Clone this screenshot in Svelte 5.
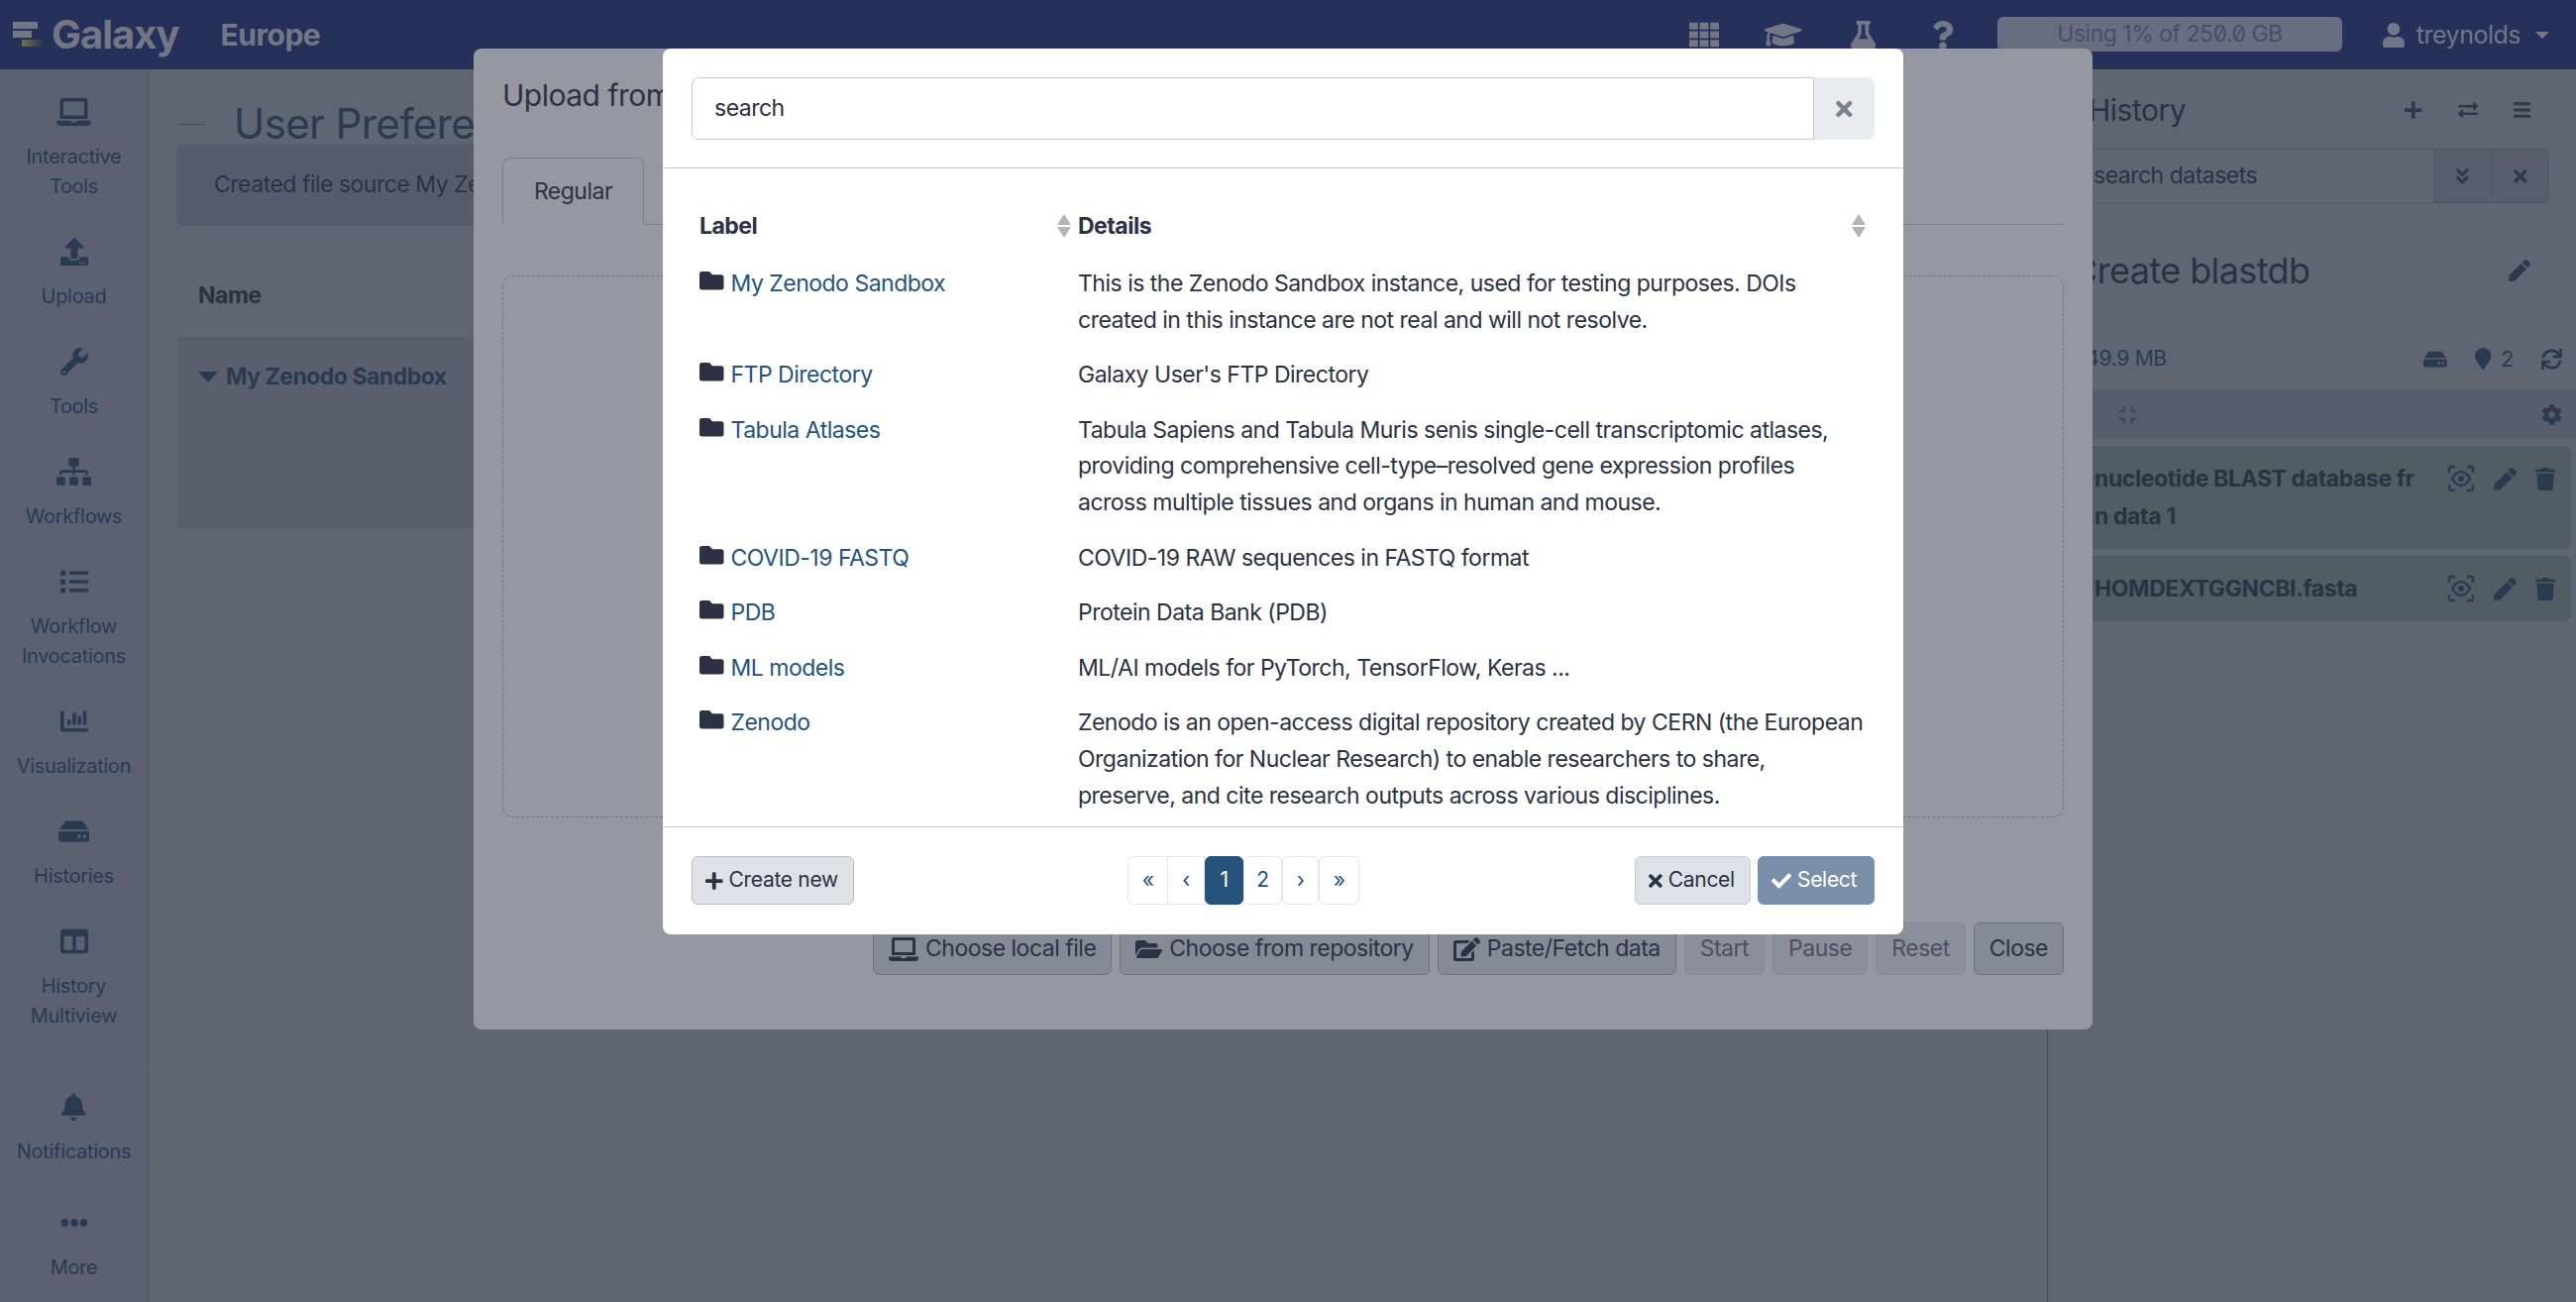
<script>
  const icons = {
    laptop: [640, "M624 416H381.54c-.74 19.81-14.71 32-32.74 32H288c-18.69 0-33.02-17.47-32.77-32H16c-8.8 0-16 7.2-16 16v16c0 35.2 28.8 64 64 64h512c35.2 0 64-28.8 64-64v-16c0-8.8-7.2-16-16-16zM576 48c0-26.4-21.6-48-48-48H112C85.6 0 64 21.6 64 48v336h512V48zm-64 272H128V64h384v256z"],
    upload: [512, "M296 384h-80c-13.3 0-24-10.7-24-24V192h-87.7c-17.8 0-26.7-21.5-14.1-34.1L242.3 5.7c7.5-7.5 19.8-7.5 27.3 0l152.2 152.2c12.6 12.6 3.7 34.1-14.1 34.1H320v168c0 13.3-10.7 24-24 24zm216-8v112c0 13.3-10.7 24-24 24H24c-13.3 0-24-10.7-24-24V376c0-13.3 10.7-24 24-24h136v8c0 30.9 25.1 56 56 56h80c30.9 0 56-25.1 56-56v-8h136c13.3 0 24 10.7 24 24zm-124 88c0-11-9-20-20-20s-20 9-20 20 9 20 20 20 20-9 20-20zm64 0c0-11-9-20-20-20s-20 9-20 20 9 20 20 20 20-9 20-20z"],
    wrench: [512, "M507.73 109.1c-2.24-9.03-13.54-12.09-20.12-5.51l-74.36 74.36-67.88-11.31-11.31-67.88 74.36-74.36c6.62-6.62 3.43-17.9-5.66-20.16-47.38-11.74-99.55.91-136.58 37.93-39.64 39.64-50.55 97.1-34.05 147.2L18.74 402.76c-24.99 24.99-24.99 65.51 0 90.5 24.99 24.99 65.51 24.99 90.5 0l213.21-213.21c50.12 16.71 107.47 5.68 147.37-34.22 37.07-37.07 49.7-89.32 37.91-136.73zM64 472c-13.25 0-24-10.75-24-24 0-13.26 10.75-24 24-24s24 10.74 24 24c0 13.25-10.75 24-24 24z"],
    sitemap: [640, "M128 352H32c-17.67 0-32 14.33-32 32v96c0 17.67 14.33 32 32 32h96c17.67 0 32-14.33 32-32v-96c0-17.67-14.33-32-32-32zm-24-80h192v48h48v-48h192v48h48v-57.59c0-21.17-17.23-38.41-38.41-38.41H344v-64h40c17.67 0 32-14.33 32-32V32c0-17.67-14.33-32-32-32H256c-17.67 0-32 14.33-32 32v96c0 17.67 14.33 32 32 32h40v64H94.41C73.23 224 56 241.23 56 262.41V320h48v-48zm264 80h-96c-17.67 0-32 14.33-32 32v96c0 17.67 14.33 32 32 32h96c17.67 0 32-14.33 32-32v-96c0-17.67-14.33-32-32-32zm240 0h-96c-17.67 0-32 14.33-32 32v96c0 17.67 14.33 32 32 32h96c17.67 0 32-14.33 32-32v-96c0-17.67-14.33-32-32-32z"],
    list: [512, "M80 368H16a16 16 0 0 0-16 16v64a16 16 0 0 0 16 16h64a16 16 0 0 0 16-16v-64a16 16 0 0 0-16-16zm0-320H16A16 16 0 0 0 0 64v64a16 16 0 0 0 16 16h64a16 16 0 0 0 16-16V64a16 16 0 0 0-16-16zm0 160H16a16 16 0 0 0-16 16v64a16 16 0 0 0 16 16h64a16 16 0 0 0 16-16v-64a16 16 0 0 0-16-16zm416 176H176a16 16 0 0 0-16 16v32a16 16 0 0 0 16 16h320a16 16 0 0 0 16-16v-32a16 16 0 0 0-16-16zm0-320H176a16 16 0 0 0-16 16v32a16 16 0 0 0 16 16h320a16 16 0 0 0 16-16V80a16 16 0 0 0-16-16zm0 160H176a16 16 0 0 0-16 16v32a16 16 0 0 0 16 16h320a16 16 0 0 0 16-16v-32a16 16 0 0 0-16-16z"],
    chart: [512, "M332.8 320h38.4c6.4 0 12.8-6.4 12.8-12.8V172.8c0-6.4-6.4-12.8-12.8-12.8h-38.4c-6.4 0-12.8 6.4-12.8 12.8v134.4c0 6.4 6.4 12.8 12.8 12.8zm96 0h38.4c6.4 0 12.8-6.4 12.8-12.8V76.8c0-6.4-6.4-12.8-12.8-12.8h-38.4c-6.4 0-12.8 6.4-12.8 12.8v230.4c0 6.4 6.4 12.8 12.8 12.8zm-288 0h38.4c6.4 0 12.8-6.4 12.8-12.8v-70.4c0-6.4-6.4-12.8-12.8-12.8h-38.4c-6.4 0-12.8 6.4-12.8 12.8v70.4c0 6.4 6.4 12.8 12.8 12.8zm96 0h38.4c6.4 0 12.8-6.4 12.8-12.8V108.8c0-6.4-6.4-12.8-12.8-12.8h-38.4c-6.4 0-12.8 6.4-12.8 12.8v198.4c0 6.4 6.4 12.8 12.8 12.8zM496 384H64V80c0-8.84-7.16-16-16-16H16C7.16 64 0 71.16 0 80v336c0 17.67 14.33 32 32 32h464c8.84 0 16-7.16 16-16v-32c0-8.84-7.16-16-16-16z"],
    hdd: [576, "M576 304v96c0 26.51-21.49 48-48 48H48c-26.51 0-48-21.49-48-48v-96c0-26.51 21.49-48 48-48h480c26.51 0 48 21.49 48 48zm-48-80a79.557 79.557 0 0 1 30.777 6.165L462.25 85.374A48.003 48.003 0 0 0 422.311 64H153.689a48 48 0 0 0-39.938 21.374L17.223 230.165A79.557 79.557 0 0 1 48 224h480zm-48 96c-17.673 0-32 14.327-32 32s14.327 32 32 32 32-14.327 32-32-14.327-32-32-32zm-96 0c-17.673 0-32 14.327-32 32s14.327 32 32 32 32-14.327 32-32-14.327-32-32-32z"],
    columns: [512, "M464 32H48C21.49 32 0 53.49 0 80v352c0 26.51 21.49 48 48 48h416c26.51 0 48-21.49 48-48V80c0-26.51-21.49-48-48-48zM224 416H64V160h160v256zm224 0H288V160h160v256z"],
    bell: [448, "M224 512c35.32 0 63.97-28.65 63.97-64H160.03c0 35.35 28.65 64 63.97 64zm215.39-149.71c-19.32-20.76-55.47-51.99-55.47-154.29 0-77.7-54.48-139.9-127.94-155.16V32c0-17.67-14.32-32-31.98-32s-31.98 14.33-31.98 32v20.84C118.56 68.1 64.08 130.3 64.08 208c0 102.3-36.15 133.53-55.47 154.29-6 6.45-8.66 14.16-8.61 21.71.11 16.4 12.98 32 32.1 32h383.8c19.12 0 32-15.6 32.1-32 .05-7.55-2.61-15.27-8.61-21.71z"],
    dots: [512, "M328 256c0 39.8-32.2 72-72 72s-72-32.2-72-72 32.2-72 72-72 72 32.2 72 72zm104-72c-39.8 0-72 32.2-72 72s32.2 72 72 72 72-32.2 72-72-32.2-72-72-72zm-352 0c-39.8 0-72 32.2-72 72s32.2 72 72 72 72-32.2 72-72-32.2-72-72-72z"],
    th: [512, "M0 48h150v118H0zM181 48h150v118H181zM362 48h150v118H362zM0 197h150v118H0zM181 197h150v118H181zM362 197h150v118H362zM0 346h150v118H0zM181 346h150v118H181zM362 346h150v118H362z"],
    cap: [640, "M622.34 153.2L343.4 67.5c-15.2-4.67-31.6-4.67-46.79 0L17.66 153.2c-23.54 7.23-23.54 38.36 0 45.59l48.63 14.94c-10.67 13.19-17.23 29.28-17.88 46.9C38.78 266.15 32 276.11 32 288c0 10.78 5.68 19.85 13.86 25.65L20.33 428.53C18.11 438.52 25.71 448 35.94 448h56.11c10.24 0 17.84-9.48 15.62-19.47L82.14 313.65C90.32 307.85 96 298.78 96 288c0-11.57-6.47-21.25-15.66-26.87.76-15.02 8.44-28.3 20.69-36.72L296.6 284.5c9.06 2.78 26.44 6.25 46.79 0l278.95-85.7c23.55-7.24 23.55-38.36 0-45.6zM352.79 315.09c-28.53 8.76-52.84 3.92-65.59 0l-145.02-44.55L128 384c0 35.35 85.96 64 192 64s192-28.65 192-64l-14.18-113.47-145.03 44.56z"],
    flask: [448, "M437.2 403.5L320 215V64h8c13.3 0 24-10.7 24-24V24c0-13.3-10.7-24-24-24H120c-13.3 0-24 10.7-24 24v16c0 13.3 10.7 24 24 24h8v151L10.8 403.5C-18.5 450.6 15.3 512 70.9 512h306.2c55.7 0 89.4-61.5 60.1-108.5zM137.9 320l48.2-77.6c3.7-5.2 5.8-11.6 5.8-18.4V64h64v160c0 6.9 2.2 13.2 5.8 18.4l48.2 77.6h-172z"],
    question: [384, "M202.021 0C122.202 0 70.503 32.703 29.914 91.026c-7.363 10.58-5.093 25.086 5.178 32.874l43.138 32.709c10.373 7.865 25.132 6.026 33.253-4.148 25.049-31.381 43.63-49.449 82.757-49.449 30.764 0 68.816 19.799 68.816 49.631 0 22.552-18.617 34.134-48.993 51.164-35.423 19.86-82.299 44.576-82.299 106.405V320c0 13.255 10.745 24 24 24h72.471c13.255 0 24-10.745 24-24v-5.773c0-42.86 125.268-44.645 125.268-160.627C377.504 66.256 286.902 0 202.021 0zM192 373.459c-38.196 0-69.271 31.075-69.271 69.271 0 38.195 31.075 69.27 69.271 69.27s69.271-31.075 69.271-69.271-31.075-69.27-69.271-69.27z"],
    user: [448, "M224 256c70.7 0 128-57.3 128-128S294.7 0 224 0 96 57.3 96 128s57.3 128 128 128zm89.6 32h-16.7c-22.2 10.2-46.9 16-72.9 16s-50.6-5.8-72.9-16h-16.7C60.2 288 0 348.2 0 422.4V464c0 26.5 21.5 48 48 48h352c26.5 0 48-21.5 48-48v-41.6c0-74.2-60.2-134.4-134.4-134.4z"],
    times: [352, "M242.72 256l100.07-100.07c12.28-12.28 12.28-32.19 0-44.48l-22.24-22.24c-12.28-12.28-32.19-12.28-44.48 0L176 189.28 75.93 89.21c-12.28-12.28-32.19-12.28-44.48 0L9.21 111.45c-12.28 12.28-12.28 32.19 0 44.48L109.28 256 9.21 356.07c-12.28 12.28-12.28 32.19 0 44.48l22.24 22.24c12.28 12.28 32.2 12.28 44.48 0L176 322.72l100.07 100.07c12.28 12.28 32.2 12.28 44.48 0l22.24-22.24c12.28-12.28 12.28-32.19 0-44.48L242.72 256z"],
    folder: [512, "M464 128H272l-64-64H48C21.49 64 0 85.49 0 112v288c0 26.51 21.49 48 48 48h416c26.51 0 48-21.49 48-48V176c0-26.51-21.49-48-48-48z"],
    folderOpen: [576, "M572.694 292.093L500.27 416.248A63.997 63.997 0 0 1 444.989 448H45.025c-18.523 0-30.064-20.093-20.731-36.093l72.424-124.155A64 64 0 0 1 152 256h399.964c18.523 0 30.064 20.093 20.73 36.093zM152 224h328v-48c0-26.51-21.49-48-48-48H272l-64-64H48C21.49 64 0 85.49 0 112v278.046l69.077-118.418C86.214 242.25 117.989 224 152 224z"],
    edit: [576, "M402.6 83.2l90.2 90.2c3.8 3.8 3.8 10 0 13.8L274.4 405.6l-92.8 10.3c-12.4 1.4-22.9-9.1-21.5-21.5l10.3-92.8L388.8 83.2c3.8-3.8 10-3.8 13.8 0zm162-22.9l-48.8-48.8c-15.2-15.2-39.9-15.2-55.2 0l-35.4 35.4c-3.8 3.8-3.8 10 0 13.8l90.2 90.2c3.8 3.8 10 3.8 13.8 0l35.4-35.4c15.2-15.3 15.2-40 0-55.2zM384 346.2V448H64V128h229.8c3.2 0 6.2-1.3 8.5-3.5l40-40c7.6-7.6 2.2-20.5-8.5-20.5H48C21.5 64 0 85.5 0 112v352c0 26.5 21.5 48 48 48h352c26.5 0 48-21.5 48-48V306.2c0-10.7-12.9-16-20.5-8.5l-40 40c-2.2 2.3-3.5 5.3-3.5 8.5z"],
    plus: [448, "M416 208H272V64c0-17.67-14.33-32-32-32h-32c-17.67 0-32 14.33-32 32v144H32c-17.67 0-32 14.33-32 32v32c0 17.67 14.33 32 32 32h144v144c0 17.67 14.33 32 32 32h32c17.67 0 32-14.33 32-32V304h144c17.67 0 32-14.33 32-32v-32c0-17.67-14.33-32-32-32z"],
    check: [512, "M173.898 439.404l-166.4-166.4c-9.997-9.997-9.997-26.206 0-36.204l36.203-36.204c9.997-9.998 26.207-9.998 36.204 0L192 312.69 432.095 72.596c9.997-9.997 26.207-9.997 36.204 0l36.203 36.204c9.997 9.997 9.997 26.206 0 36.204l-294.4 294.401c-9.998 9.997-26.207 9.997-36.204-.001z"],
    exchange: [512, "M0 168v-16c0-13.255 10.745-24 24-24h360V80c0-21.367 25.899-32.042 40.971-16.971l80 80c9.372 9.373 9.372 24.569 0 33.941l-80 80C409.956 271.982 384 261.456 384 240v-48H24c-13.255 0-24-10.745-24-24zm488 152H128v-48c0-21.314-25.862-32.08-40.971-16.971l-80 80c-9.372 9.373-9.372 24.569 0 33.941l80 80C102.057 463.997 128 453.437 128 432v-48h360c13.255 0 24-10.745 24-24v-16c0-13.255-10.745-24-24-24z"],
    bars: [448, "M16 132h416c8.837 0 16-7.163 16-16V76c0-8.837-7.163-16-16-16H16C7.163 60 0 67.163 0 76v40c0 8.837 7.163 16 16 16zm0 160h416c8.837 0 16-7.163 16-16v-40c0-8.837-7.163-16-16-16H16c-8.837 0-16 7.163-16 16v40c0 8.837 7.163 16 16 16zm0 160h416c8.837 0 16-7.163 16-16v-40c0-8.837-7.163-16-16-16H16c-8.837 0-16 7.163-16 16v40c0 8.837 7.163 16 16 16z"],
    chevrons: [320, "M143 256.3L7 120.3c-9.4-9.4-9.4-24.6 0-33.9l22.6-22.6c9.4-9.4 24.6-9.4 33.9 0l96.4 96.4 96.4-96.4c9.4-9.4 24.6-9.4 33.9 0L313 86.3c9.4 9.4 9.4 24.6 0 33.9l-136 136c-9.4 9.5-24.6 9.5-34 .1zm34 192l136-136c9.4-9.4 9.4-24.6 0-33.9l-22.6-22.6c-9.4-9.4-24.6-9.4-33.9 0L160 352.1l-96.4-96.4c-9.4-9.4-24.6-9.4-33.9 0L7 278.3c-9.4 9.4-9.4 24.6 0 33.9l136 136c9.4 9.5 24.6 9.5 34 .1z"],
    pen: [512, "M290.74 93.24l128.02 128.02-277.99 277.99-114.14 12.6C11.35 513.54-1.56 500.62.14 485.34l12.7-114.22 277.9-277.88zm207.2-19.06l-60.11-60.11c-18.75-18.75-49.16-18.75-67.91 0l-56.55 56.55 128.02 128.02 56.55-56.55c18.75-18.76 18.75-49.16 0-67.91z"],
    marker: [384, "M172.268 501.67C26.97 291.031 0 269.413 0 192 0 85.961 85.961 0 192 0s192 85.961 192 192c0 77.413-26.97 99.031-172.268 309.67-9.535 13.774-29.93 13.773-39.464 0z"],
    sync: [512, "M440.65 12.57l4 82.77A247.16 247.16 0 0 0 255.83 8C134.73 8 33.91 94.92 12.29 209.82A12 12 0 0 0 24.09 224h49.05a12 12 0 0 0 11.67-9.26 175.91 175.91 0 0 1 317-56.94l-101.46-4.86a12 12 0 0 0-12.57 12v47.41a12 12 0 0 0 12 12H500a12 12 0 0 0 12-12V12a12 12 0 0 0-12-12h-47.37a12 12 0 0 0-11.98 12.57zM255.83 432a175.61 175.61 0 0 1-146-77.8l101.8 4.87a12 12 0 0 0 12.57-12v-47.4a12 12 0 0 0-12-12H12a12 12 0 0 0-12 12V500a12 12 0 0 0 12 12h47.35a12 12 0 0 0 12-12.6l-4.15-82.57A247.17 247.17 0 0 0 255.83 504c121.11 0 221.93-86.92 243.55-201.82a12 12 0 0 0-11.8-14.18h-49.05a12 12 0 0 0-11.67 9.26A175.86 175.86 0 0 1 255.83 432z"],
    cog: [512, "M487.4 315.7l-42.6-24.6c4.3-23.2 4.3-47 0-70.2l42.6-24.6c4.9-2.8 7.1-8.6 5.5-14-11.1-35.6-30-67.8-54.7-94.6-3.8-4.1-10-5.1-14.8-2.3L380.8 110c-17.9-15.4-38.5-27.3-60.8-35.1V25.8c0-5.6-3.9-10.5-9.4-11.7-36.7-8.2-74.3-7.8-109.2 0-5.5 1.2-9.4 6.1-9.4 11.7V75c-22.2 7.9-42.8 19.8-60.8 35.1L88.7 85.5c-4.9-2.8-11-1.9-14.8 2.3-24.7 26.7-43.6 58.9-54.7 94.6-1.7 5.4.6 11.2 5.5 14L67.3 221c-4.3 23.2-4.3 47 0 70.2l-42.6 24.6c-4.9 2.8-7.1 8.6-5.5 14 11.1 35.6 30 67.8 54.7 94.6 3.8 4.1 10 5.1 14.8 2.3l42.6-24.6c17.9 15.4 38.5 27.3 60.8 35.1v49.2c0 5.6 3.9 10.5 9.4 11.7 36.7 8.2 74.3 7.8 109.2 0 5.5-1.2 9.4-6.1 9.4-11.7v-49.2c22.2-7.9 42.8-19.8 60.8-35.1l42.6 24.6c4.9 2.8 11 1.9 14.8-2.3 24.7-26.7 43.6-58.9 54.7-94.6 1.5-5.5-.7-11.3-5.6-14.1zM256 336c-44.1 0-80-35.9-80-80s35.9-80 80-80 80 35.9 80 80-35.9 80-80 80z"],
    trash: [448, "M432 32H312l-9.4-18.7A24 24 0 0 0 281.1 0H166.8a23.72 23.72 0 0 0-21.4 13.3L136 32H16A16 16 0 0 0 0 48v32a16 16 0 0 0 16 16h416a16 16 0 0 0 16-16V48a16 16 0 0 0-16-16zM53.2 467a48 48 0 0 0 47.9 45h245.8a48 48 0 0 0 47.9-45L416 128H32z"],
    compress: [448, "M436 192H312c-13.3 0-24-10.7-24-24V44c0-6.6 5.4-12 12-12h40c6.6 0 12 5.4 12 12v84h84c6.6 0 12 5.4 12 12v40c0 6.6-5.4 12-12 12zm-276-24V44c0-6.6-5.4-12-12-12h-40c-6.6 0-12 5.4-12 12v84H12c-6.6 0-12 5.4-12 12v40c0 6.6 5.4 12 12 12h124c13.3 0 24-10.7 24-24zm0 300V344c0-13.3-10.7-24-24-24H12c-6.6 0-12 5.4-12 12v40c0 6.6 5.4 12 12 12h84v84c0 6.6 5.4 12 12 12h40c6.6 0 12-5.4 12-12zm192 0v-84h84c6.6 0 12-5.4 12-12v-40c0-6.6-5.4-12-12-12H312c-13.3 0-24 10.7-24 24v124c0 6.6 5.4 12 12 12h40c6.6 0 12-5.4 12-12z"]
  };

  const topNav = [
    { icon: "laptop", label: ["Interactive", "Tools"] },
    { icon: "upload", label: ["Upload"] },
    { icon: "wrench", label: ["Tools"] },
    { icon: "sitemap", label: ["Workflows"] },
    { icon: "list", label: ["Workflow", "Invocations"] },
    { icon: "chart", label: ["Visualization"] },
    { icon: "hdd", label: ["Histories"] },
    { icon: "columns", label: ["History", "Multiview"] }
  ];
  const bottomNav = [
    { icon: "bell", label: ["Notifications"] },
    { icon: "dots", label: ["More"] }
  ];
  const rows = [
    ["My Zenodo Sandbox", "This is the Zenodo Sandbox instance, used for testing purposes. DOIs created in this instance are not real and will not resolve."],
    ["FTP Directory", "Galaxy User's FTP Directory"],
    ["Tabula Atlases", "Tabula Sapiens and Tabula Muris senis single-cell transcriptomic atlases, providing comprehensive cell-type–resolved gene expression profiles across multiple tissues and organs in human and mouse."],
    ["COVID-19 FASTQ", "COVID-19 RAW sequences in FASTQ format"],
    ["PDB", "Protein Data Bank (PDB)"],
    ["ML models", "ML/AI models for PyTorch, TensorFlow, Keras ..."],
    ["Zenodo", "Zenodo is an open-access digital repository created by CERN (the European Organization for Nuclear Research) to enable researchers to share, preserve, and cite research outputs across various disciplines."]
  ];
  const pages = ["«", "‹", "1", "2", "›", "»"];
</script>

{#snippet ic(name)}
  <svg class="i" viewBox="0 0 {icons[name][0]} 512" aria-hidden="true"><path d={icons[name][1]} /></svg>
{/snippet}

{#snippet eye()}
  <svg class="i eye" viewBox="0 0 28 28" aria-hidden="true">
    <path class="ln" d="M2 8V4a2 2 0 0 1 2-2h4M20 2h4a2 2 0 0 1 2 2v4M26 20v4a2 2 0 0 1-2 2h-4M8 26H4a2 2 0 0 1-2-2v-4" />
    <path class="ln" d="M5 14c3-5 6-7 9-7s6 2 9 7c-3 5-6 7-9 7s-6-2-9-7z" />
    <circle cx="14" cy="14" r="3" />
  </svg>
{/snippet}

{#snippet sort()}
  <svg class="sort" viewBox="0 0 16 24" aria-hidden="true"><path d="M8 0l7 11H1zM8 24L1 13h14z" /></svg>
{/snippet}

<div class="app">
  <header class="mast">
    <svg class="logo" viewBox="0 0 34 28" aria-hidden="true">
      <defs><linearGradient id="lg"><stop offset="0" stop-color="#b9ad4a" /><stop offset="1" stop-color="#b9ad4a" stop-opacity="0" /></linearGradient></defs>
      <rect x="1" y="1" width="25" height="7" fill="#babbc5" />
      <rect x="1" y="10" width="19" height="7" fill="#babbc5" />
      <rect x="10" y="19" width="23" height="7" fill="url(#lg)" />
    </svg>
    <span class="brand">Galaxy</span>
    <span class="site">Europe</span>
    <nav class="mnav">
      <span class="mi th">{@render ic("th")}</span>
      <span class="mi cap">{@render ic("cap")}</span>
      <span class="mi flask">{@render ic("flask")}</span>
      <span class="mi q">{@render ic("question")}</span>
    </nav>
    <div class="quota">Using 1% of 250.0 GB</div>
    <div class="usr">{@render ic("user")}<span>treynolds</span><i class="caret"></i></div>
  </header>

  <div class="body">
    <aside class="side">
      <div class="sgroup">
        {#each topNav as n}
          <div class="nitem"><div class="nicon">{@render ic(n.icon)}</div>{#each n.label as l}<div class="nlabel">{l}</div>{/each}</div>
        {/each}
      </div>
      <div class="sbottom">
        {#each bottomNav as n}
          <div class="nitem"><div class="nicon">{@render ic(n.icon)}</div>{#each n.label as l}<div class="nlabel">{l}</div>{/each}</div>
        {/each}
      </div>
    </aside>

    <main class="main">
      <div class="ptitle"><i class="dash"></i><h1>User Preferences</h1></div>
      <div class="alert">Created file source My Zenodo Sandbox</div>
      <div class="thead">Name</div>
      <div class="trow"><span class="tricaret"></span>My Zenodo Sandbox</div>
    </main>

    <aside class="hist">
      <div class="hhead"><span class="htitle">History</span><div class="hicons">{@render ic("plus")}{@render ic("exchange")}{@render ic("bars")}</div></div>
      <div class="hsearch">
        <span class="hsq">search datasets</span>
        <span class="hbtn">{@render ic("chevrons")}</span>
        <span class="hbtn">{@render ic("times")}</span>
      </div>
      <div class="hname"><span>Create blastdb</span><span class="hpen">{@render ic("pen")}</span></div>
      <div class="hstats"><span class="hsize">149.9 MB</span><div class="hst">{@render ic("hdd")}<span class="pin">{@render ic("marker")}<b>2</b></span>{@render ic("sync")}</div></div>
      <div class="htool"><span class="cmp">{@render ic("compress")}</span><span class="gear">{@render ic("cog")}</span></div>
      <div class="ds tall">
        <div class="dst"><div>nucleotide BLAST database fr</div><div>n data 1</div></div>
        <div class="dsi">{@render eye()}{@render ic("pen")}{@render ic("trash")}</div>
      </div>
      <div class="ds short">
        <div class="dst"><div>HOMDEXTGGNCBI.fasta</div></div>
        <div class="dsi">{@render eye()}{@render ic("pen")}{@render ic("trash")}</div>
      </div>
    </aside>
  </div>

  <div class="backdrop one"></div>

  <section class="modal up">
    <h2 class="uptitle">Upload from Remote Files</h2>
    <div class="tabs"><span class="tab">Regular</span></div>
    <div class="drop"></div>
    <div class="upbtns">
      <span class="btn">{@render ic("laptop")}Choose local file</span>
      <span class="btn">{@render ic("folderOpen")}Choose from repository</span>
      <span class="btn">{@render ic("edit")}Paste/Fetch data</span>
      <span class="btn off">Start</span>
      <span class="btn off">Pause</span>
      <span class="btn off">Reset</span>
      <span class="btn">Close</span>
    </div>
  </section>

  <div class="backdrop two"></div>

  <section class="modal sel">
    <div class="shead">
      <div class="sinput">search</div>
      <div class="sclear">{@render ic("times")}</div>
    </div>
    <div class="sbody">
      <div class="grow ghead">
        <div class="gl"><span>Label</span>{@render sort()}</div>
        <div class="gd"><span>Details</span>{@render sort()}</div>
      </div>
      {#each rows as r}
        <div class="grow">
          <div class="gl"><span class="fold">{@render ic("folder")}</span><a href="#x">{r[0]}</a></div>
          <div class="gd">{r[1]}</div>
        </div>
      {/each}
    </div>
    <div class="sfoot">
      <span class="fbtn create">{@render ic("plus")}Create new</span>
      <div class="pager">
        {#each pages as p, i}
          <span class="pg" class:cur={i === 2}>{p}</span>
        {/each}
      </div>
      <div class="facts">
        <span class="fbtn cancel">{@render ic("times")}Cancel</span>
        <span class="fbtn select">{@render ic("check")}Select</span>
      </div>
    </div>
  </section>
</div>

<style>
  :global(body) { margin: 0; }
  .app {
    position: relative;
    width: 2600px;
    height: 1314px;
    overflow: hidden;
    display: flex;
    flex-direction: column;
    background: #fff;
    color: #2c3143;
    font-family: Inter, "Noto Sans", sans-serif;
    font-size: 23px;
    letter-spacing: -0.5px;
    line-height: 36.75px;
  }
  .i { height: 1em; width: auto; fill: currentColor; display: inline-block; flex: none; }
  .i.eye .ln { fill: none; stroke: currentColor; stroke-width: 2.4; }

  .mast {
    position: relative;
    z-index: 2;
    height: 70px;
    flex: none;
    display: flex;
    align-items: center;
    background: #1e3171;
    color: #babbc5;
  }
  .logo { width: 34px; height: 28px; margin-left: 12px; margin-top: 0; flex: none; }
  .brand { margin-left: 6px; font-size: 40px; font-weight: 700; letter-spacing: -1px; }
  .site { margin-left: 42px; font-size: 30px; font-weight: 700; }
  .mnav { margin-left: auto; display: flex; align-items: center; }
  .mi { display: flex; align-items: center; justify-content: center; }
  .th { font-size: 30px; margin-right: 46px; }
  .cap { font-size: 30px; margin-right: 49px; }
  .flask { font-size: 29px; margin-right: 57px; }
  .q { font-size: 29px; margin-right: 44px; }
  .quota {
    width: 348px;
    height: 35px;
    margin-bottom: 2px;
    border-radius: 6px;
    background: #a5a9bb;
    display: flex;
    align-items: center;
    justify-content: center;
    font-size: 23px;
    font-feature-settings: "zero";
    color: #66698a;
  }
  .usr { display: flex; align-items: center; margin-left: 41px; margin-right: 27px; font-size: 25px; }
  .usr span { margin-left: 12px; }
  .caret { width: 0; height: 0; margin-left: 15px; border: 7px solid transparent; border-top-color: currentColor; border-bottom-width: 0; }

  .body { flex: 1; display: flex; min-height: 0; }
  .side {
    width: 149px;
    flex: none;
    border-right: 1px solid #c8ccd6;
    background: #eceef8;
    display: flex;
    flex-direction: column;
    color: #25537b;
  }
  .sgroup { flex: 1; }
  .sbottom { border-top: 1px dotted #b8bcc8; padding-bottom: 12px; }
  .sbottom .nitem + .nitem { margin-top: 6px; }
  .nitem { padding: 25px 0 8px; text-align: center; }
  .nicon { height: 36px; font-size: 28px; display: flex; align-items: center; justify-content: center; margin-bottom: 12px; }
  .nlabel { font-size: 20px; line-height: 30px; letter-spacing: -0.3px; }

  .main { flex: 1; padding: 0 0 0 28px; min-width: 0; }
  .ptitle { display: flex; align-items: center; height: 70px; margin-top: 20px; }
  .dash { width: 29px; border-top: 1px solid #8d90a0; }
  .ptitle h1 { margin: 0 0 0 29px; font-size: 42px; font-weight: 400; color: #25537b; letter-spacing: -0.6px; }
  .alert { margin-top: -15px; height: 83px; display: flex; align-items: center; padding-left: 38px; background: #d4dcec; border-radius: 7px; }
  .thead { margin-top: 52px; padding-left: 22px; font-weight: 700; }
  .trow { margin-top: 23px; height: 193px; padding: 22px 0 0 22px; background: #e8e8ea; font-weight: 700; color: #25537b; box-sizing: border-box; display: block; }
  .tricaret { display: inline-block; width: 0; height: 0; margin-right: 8px; border: 10px solid transparent; border-top: 11px solid currentColor; border-bottom-width: 0; vertical-align: 2px; }

  .hist { width: 534px; flex: none; border-left: 1px solid #8d90a0; box-sizing: border-box; display: flex; flex-direction: column; }
  .hhead { height: 50px; margin-top: 16px; padding: 0 46px 0 41px; display: flex; align-items: center; justify-content: space-between; }
  .htitle { font-size: 30px; letter-spacing: -0.5px; }
  .hicons { display: flex; align-items: center; gap: 36px; font-size: 20px; color: #25537b; }
  .hsearch { height: 55px; margin: 14px 27px 0 24px; display: flex; align-items: stretch; border: 1px solid #c3c8d4; border-radius: 6px; box-sizing: border-box; }
  .hsq { flex: 1; display: flex; align-items: center; padding-left: 21px; }
  .hbtn { width: 57px; background: #dfe3ea; border-left: 1px solid #c3c8d4; display: flex; align-items: center; justify-content: center; font-size: 20px; color: #25537b; }
  .hname { height: 66px; margin-top: 35px; padding: 0 46px 0 24px; display: flex; align-items: center; justify-content: space-between; font-size: 36px; letter-spacing: -0.6px; }
  .hpen { display: flex; font-size: 22px; color: #25537b; }
  .hstats { height: 44px; margin-top: 34px; padding: 0 14px 0 30px; display: flex; align-items: center; justify-content: space-between; font-size: 21px; color: #25537b; }
  .hsize { letter-spacing: -0.3px; }
  .hst { display: flex; align-items: center; gap: 28px; font-size: 21px; }
  .pin { display: flex; align-items: center; gap: 10px; font-size: 22px; }
  .pin b { font-weight: 400; }
  .htool { height: 49px; margin-top: 10px; padding: 0 14px 0 72px; display: flex; align-items: center; justify-content: space-between; background: #e0dce8; color: #25537b; font-size: 20px; }
  .cmp { display: flex; opacity: .55; }
  .gear { display: flex; font-size: 21px; }
  .ds { margin: 7px 5px 0 0; background: #c0dcc0; border-radius: 7px; display: flex; justify-content: space-between; padding-left: 47px; box-sizing: border-box; font-weight: 700; }
  .tall { height: 104px; padding-top: 14px; }
  .short { height: 66px; padding-top: 14px; }
  .dst { white-space: nowrap; line-height: 38px; letter-spacing: -0.4px; }
  .dsi { display: flex; gap: 19px; height: 38px; align-items: center; padding-right: 16px; color: #25537b; font-size: 23px; }
  .dsi .eye { font-size: 28px; }

  .backdrop { position: absolute; inset: 0; background: #2c3143; opacity: .5; }
  .backdrop.one { z-index: 1; }
  .backdrop.two { z-index: 4; }

  .modal { position: absolute; background: #fff; border-radius: 8px; box-sizing: border-box; display: flex; flex-direction: column; }
  .up { z-index: 3; left: 478px; top: 49px; width: 1634px; height: 990px; padding: 0 29px; }
  .uptitle { margin: 24px 0 0; font-size: 30px; font-weight: 400; line-height: 46px; letter-spacing: -0.5px; }
  .tabs { margin-top: 40px; height: 67px; border-bottom: 1px solid #c8ccd6; display: flex; }
  .tab { width: 143px; height: 68px; box-sizing: border-box; border: 1px solid #c8ccd6; border-bottom: 0; border-radius: 8px 8px 0 0; background: #fff; display: flex; align-items: center; justify-content: center; }
  .drop { margin-top: 51px; height: 545px; border: 1px dashed #b4b8c4; border-radius: 10px; }
  .upbtns { margin-top: 106px; display: flex; justify-content: flex-end; gap: 8px; }
  .btn { height: 53px; box-sizing: border-box; padding: 0 15px; border: 1px solid #b0b4bd; border-radius: 6px; background: #dee2e6; display: flex; align-items: center; gap: 7px; }
  .btn .i { font-size: 24px; }
  .btn.off { background: #ecedf0; border-color: #dcdee3; color: #6d7080; }

  .sel { z-index: 5; left: 669px; top: 49px; width: 1252px; height: 894px; }
  .shead { height: 121px; flex: none; padding: 29px 29px 0; box-sizing: border-box; display: flex; align-items: flex-start; border-bottom: 1px solid #c3c9d6; }
  .sinput { flex: 1; height: 63px; box-sizing: border-box; border: 1px solid #c3c9d6; border-radius: 7px 0 0 7px; padding-left: 22px; display: flex; align-items: center; }
  .sclear { width: 61px; height: 63px; box-sizing: border-box; background: #e9ebee; border-radius: 0 7px 7px 0; display: flex; align-items: center; justify-content: center; color: #7d808d; font-size: 24px; }
  .sbody { height: 664px; flex: none; overflow: hidden; padding: 0 37px; box-sizing: border-box; }
  .grow { display: grid; grid-template-columns: 382px 1fr; }
  .gl, .gd { padding: 9.375px 0; position: relative; }
  .gl { display: flex; align-items: flex-start; }
  .ghead { height: 88.5px; padding-top: 28px; box-sizing: border-box; font-weight: 700; }
  .ghead .gl, .ghead .gd { display: flex; justify-content: space-between; align-items: center; padding: 0; height: 60px; }
  .ghead .gl { padding-right: 6px; }
  .ghead .gd { padding-right: 0; }
  .sort { width: 16px; height: 24px; fill: #b4b4b4; flex: none; }
  .fold { height: 36.75px; display: flex; align-items: center; font-size: 24.5px; margin-right: 7px; margin-top: -3px; }
  a { color: #25537b; text-decoration: none; }
  .sfoot { flex: 1; display: flex; align-items: flex-start; justify-content: space-between; padding: 29px 29px 0; box-sizing: border-box; border-top: 1px solid #c3c9d6; position: relative; }
  .fbtn { height: 49px; box-sizing: border-box; border: 1px solid #b8bcc4; border-radius: 6px; background: #dee2e6; display: flex; align-items: center; gap: 6px; padding: 0 13px; font-size: 21px; letter-spacing: -0.3px; }
  .fbtn .i { font-size: 20px; }
  .create { width: 164px; }
  .facts { display: flex; gap: 7px; }
  .cancel { width: 117px; border-color: #c8ccd4; }
  .select { width: 118px; background: #7a90aa; border-color: #7a90aa; color: #fff; }
  .pager { display: flex; position: absolute; left: 469px; top: 29px; }
  .pg { height: 49px; box-sizing: border-box; border: 1px solid #e4e6ea; border-radius: 6px; color: #25537b; display: flex; align-items: center; justify-content: center; font-size: 21px; width: 39px; }
  .pg:first-child { width: 41px; border-radius: 6px 0 0 6px; }
  .pg:nth-child(2) { width: 37px; border-left: 0; border-radius: 0; }
  .pg:last-child { width: 41px; }
  .pg:nth-child(5) { width: 37px; }
  .pg.cur { background: #25537b; color: #fff; border-color: #25537b; }
</style>
